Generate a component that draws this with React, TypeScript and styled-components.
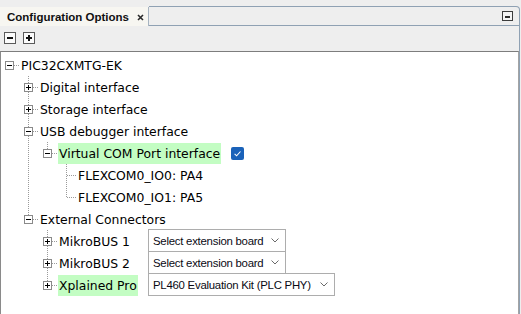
import React from 'react';
import styled, { createGlobalStyle } from 'styled-components';

const GlobalStyle = createGlobalStyle`
  html, body {
    margin: 0;
    padding: 0;
    background: #eeeeee;
  }
  body {
    font-family: "DejaVu Sans", sans-serif;
    overflow: hidden;
  }
`;

const LINE = '#9a9a9a';
const FRAME = '#8fa1b3';

const Page = styled.div`
  width: 521px;
  height: 314px;
  padding-top: 6px;
  box-sizing: border-box;
  display: flex;
  flex-direction: column;
`;

const Frame = styled.div`
  width: 520px;
  flex: 1;
  min-height: 0;
  display: flex;
  flex-direction: column;
`;

const TabBar = styled.div`
  display: flex;
  height: 20px;
`;

const Tab = styled.div`
  width: 149px;
  height: 19px;
  margin-top: 1px;
  box-sizing: border-box;
  border-right: 1px solid #a7b4c1;
  background: #f7f6f1;
  display: flex;
  align-items: center;
  padding-left: 7px;
  font-family: "Liberation Sans", Arial, sans-serif;
  font-weight: 700;
  font-size: 11.5px;
  color: #111;
`;

const CloseMark = styled.svg`
  margin-left: 8px;
  margin-top: 1px;
`;

const TabFill = styled.div`
  flex: 1;
  box-sizing: border-box;
  border: 1px solid ${FRAME};
  border-left: none;
  border-top-right-radius: 4px;
  display: flex;
  align-items: center;
  justify-content: flex-end;
  padding-right: 6px;
`;

const Body = styled.div`
  flex: 1;
  min-height: 0;
  display: flex;
  flex-direction: column;
  border-right: 1px solid ${FRAME};
`;

const Toolbar = styled.div`
  height: 25px;
  box-sizing: border-box;
  display: flex;
  gap: 7px;
  padding: 6px 0 0 4px;
`;

const ToolButton = styled.span<{ $plus?: boolean }>`
  position: relative;
  width: 12px;
  height: 12px;
  box-sizing: border-box;
  border: 1px solid #5a5a5a;
  background: #fbfbfb;

  &::before {
    content: '';
    position: absolute;
    left: 2px;
    top: 4px;
    width: 6px;
    height: 2px;
    background: #111;
  }
  &::after {
    content: '';
    display: ${(p) => (p.$plus ? 'block' : 'none')};
    position: absolute;
    left: 4px;
    top: 2px;
    width: 2px;
    height: 6px;
    background: #111;
  }
`;

const Tree = styled.div`
  flex: 1;
  background: #ffffff;
  border-top: 1px solid #7d7d7d;
  border-left: 1px solid #8a8a8a;
  border-right: 1px solid #a4a4a4;
  padding-top: 2px;
`;

const Row = styled.div`
  height: 22px;
  display: flex;
  align-items: stretch;
`;

const Cell = styled.span<{ $v: 'none' | 'full' | 'half'; $h: boolean }>`
  position: relative;
  flex: 0 0 19px;
  display: flex;
  align-items: flex-start;

  &::before {
    content: '';
    display: ${(p) => (p.$v === 'none' ? 'none' : 'block')};
    position: absolute;
    left: 8px;
    top: 0;
    width: 1px;
    height: ${(p) => (p.$v === 'full' ? '22px' : '11px')};
    background: repeating-linear-gradient(to bottom, ${LINE} 0 1px, transparent 1px 2px);
  }
  &::after {
    content: '';
    display: ${(p) => (p.$h ? 'block' : 'none')};
    position: absolute;
    left: 9px;
    top: 11px;
    width: 10px;
    height: 1px;
    background: repeating-linear-gradient(to right, ${LINE} 0 1px, transparent 1px 2px);
  }
`;

const Toggle = styled.span<{ $open: boolean }>`
  position: relative;
  z-index: 1;
  width: 9px;
  height: 9px;
  margin: 7px 0 0 4px;
  box-sizing: border-box;
  border: 1px solid #8a8a8a;
  background: #ffffff;

  &::before {
    content: '';
    position: absolute;
    left: 1px;
    top: 3px;
    width: 5px;
    height: 1px;
    background: #000;
  }
  &::after {
    content: '';
    display: ${(p) => (p.$open ? 'none' : 'block')};
    position: absolute;
    left: 3px;
    top: 1px;
    width: 1px;
    height: 5px;
    background: #000;
  }
`;

const LabelSlot = styled.span<{ $w?: number }>`
  display: flex;
  align-items: flex-start;
  width: ${(p) => (p.$w ? `${p.$w}px` : 'auto')};
  flex: 0 0 auto;
`;

const Label = styled.span<{ $hl?: boolean }>`
  margin-top: 1px;
  height: 21px;
  line-height: 21px;
  padding: 0 1px;
  font-size: 12.4px;
  color: #000;
  white-space: nowrap;
  background: ${(p) => (p.$hl ? '#c3fdc3' : 'transparent')};
`;

const Check = styled.svg`
  align-self: center;
  margin-left: 10px;
`;

const Select = styled.div<{ $w: number }>`
  width: ${(p) => p.$w}px;
  height: 23px;
  margin-top: -1px;
  box-sizing: border-box;
  border: 1px solid #adadad;
  background: #ffffff;
  display: flex;
  align-items: center;
  justify-content: space-between;
  padding: 0 6px 0 4px;
  font-family: "Liberation Sans", Arial, sans-serif;
  font-size: 11.4px;
  letter-spacing: -0.25px;
  color: #0a0a14;
  white-space: nowrap;
`;

type TreeNode = {
  label: string;
  children?: TreeNode[];
  open?: boolean;
  highlight?: boolean;
  checked?: boolean;
  select?: { value: string; width: number };
};

const tree: TreeNode = {
  label: 'PIC32CXMTG-EK',
  open: true,
  children: [
    { label: 'Digital interface', children: [] },
    { label: 'Storage interface', children: [] },
    {
      label: 'USB debugger interface',
      open: true,
      children: [
        {
          label: 'Virtual COM Port interface',
          open: true,
          highlight: true,
          checked: true,
          children: [{ label: 'FLEXCOM0_IO0: PA4' }, { label: 'FLEXCOM0_IO1: PA5' }],
        },
      ],
    },
    {
      label: 'External Connectors',
      open: true,
      children: [
        { label: 'MikroBUS 1', children: [], select: { value: 'Select extension board', width: 138 } },
        { label: 'MikroBUS 2', children: [], select: { value: 'Select extension board', width: 138 } },
        {
          label: 'Xplained Pro',
          children: [],
          highlight: true,
          select: { value: 'PL460 Evaluation Kit (PLC PHY)', width: 187 },
        },
      ],
    },
  ],
};

type FlatRow = { node: TreeNode; level: number; lastPath: boolean[] };

const flatten = (node: TreeNode, level: number, lastPath: boolean[], out: FlatRow[]) => {
  out.push({ node, level, lastPath });
  if (node.open && node.children) {
    node.children.forEach((child, i) =>
      flatten(child, level + 1, [...lastPath, i === node.children!.length - 1], out)
    );
  }
  return out;
};

const Chevron = () => (
  <svg width="8" height="5" viewBox="0 0 8 5">
    <path d="M0.5 0.5 L4 4 L7.5 0.5" fill="none" stroke="#6a6a6a" strokeWidth="1" />
  </svg>
);

const TreeRow: React.FC<{ row: FlatRow }> = ({ row }) => {
  const { node, level, lastPath } = row;
  const cells = [];
  for (let c = 0; c < level; c++) {
    const ancestorLast = c === 0 ? true : lastPath[c];
    cells.push(<Cell key={c} $v={ancestorLast ? 'none' : 'full'} $h={false} />);
  }
  const ownV = level === 0 ? 'none' : lastPath[level] ? 'half' : 'full';
  cells.push(
    <Cell key="own" $v={ownV} $h>
      {node.children && <Toggle $open={!!node.open} />}
    </Cell>
  );

  return (
    <Row>
      {cells}
      <LabelSlot $w={node.select ? 90 : undefined}>
        <Label $hl={node.highlight}>{node.label}</Label>
      </LabelSlot>
      {node.checked && (
        <Check width="13" height="13" viewBox="0 0 13 13">
          <rect x="0" y="0" width="13" height="13" rx="2" fill="#1a62b9" />
          <path d="M3.6 6.9 L5.6 8.8 L9.5 4.5" fill="none" stroke="#ffffff" strokeWidth="1.1" />
        </Check>
      )}
      {node.select && (
        <Select $w={node.select.width}>
          <span>{node.select.value}</span>
          <Chevron />
        </Select>
      )}
    </Row>
  );
};

export default function App() {
  const rows = flatten(tree, 0, [true], []);
  return (
    <>
      <GlobalStyle />
      <Page>
        <Frame>
          <TabBar>
            <Tab>
              Configuration Options
              <CloseMark width="7" height="7" viewBox="0 0 7 7">
                <path d="M1 1 L6 6 M6 1 L1 6" stroke="#2a2a2a" strokeWidth="1.6" />
              </CloseMark>
            </Tab>
            <TabFill>
              <svg width="11" height="10" viewBox="0 0 11 10">
                <rect x="0.5" y="0.5" width="10" height="9" fill="#f4f4f4" stroke="#3c3c3c" />
                <rect x="3" y="5" width="5" height="2" fill="#2e2e2e" />
              </svg>
            </TabFill>
          </TabBar>
          <Body>
            <Toolbar>
              <ToolButton />
              <ToolButton $plus />
            </Toolbar>
            <Tree>
              {rows.map((r, i) => (
                <TreeRow key={i} row={r} />
              ))}
            </Tree>
          </Body>
        </Frame>
      </Page>
    </>
  );
}
